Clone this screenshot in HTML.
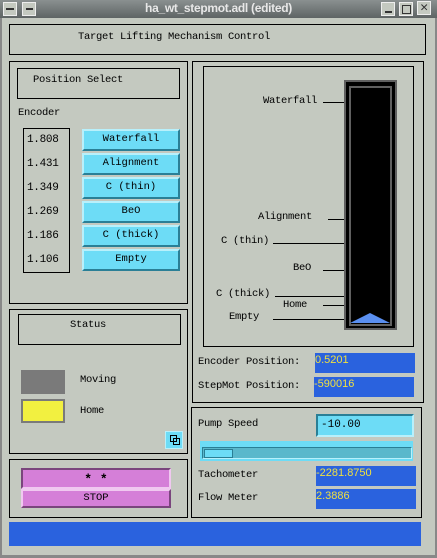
<html><head><style>
body{margin:0;width:437px;height:558px;background:#c4c9c0;position:relative;overflow:hidden;font-family:"Liberation Mono",monospace;font-size:10.5px;color:#000}
div{position:absolute;box-sizing:border-box}
.b{border:1px solid #000}
.t{white-space:nowrap;letter-spacing:-0.3px}
.btn{background:#6ddcf6;border:2px solid;border-color:#b8f0fb #2a7f96 #2a7f96 #b8f0fb;text-align:center;line-height:17px}
.v{background:#2a62de;color:#f0e040;line-height:14px;font-family:"Liberation Sans",sans-serif;font-size:11px}
.ln{height:1px;background:#000}
</style></head><body>
<div style="left:0;top:0;width:437px;height:18px;background:linear-gradient(#8a9090,#5e6464)"></div>
<div style="left:3px;top:2px;width:14px;height:14px;background:#c4c9c0;border:1px solid #eee"><div style="left:2px;top:5px;width:8px;height:2px;background:#333"></div></div>
<div style="left:22px;top:2px;width:14px;height:14px;background:#c4c9c0;border:1px solid #eee"><div style="left:3px;top:5px;width:7px;height:2px;background:#333"></div></div>
<div class="t" style="left:0;width:437px;top:1px;text-align:center;color:#e8e8e8;font-family:'Liberation Sans',sans-serif;font-weight:bold;font-size:12px">ha_wt_stepmot.adl (edited)</div>
<div style="left:381px;top:2px;width:14px;height:14px;background:#c4c9c0;border:1px solid #eee"><div style="left:3px;top:8px;width:7px;height:2px;background:#333"></div></div>
<div style="left:399px;top:2px;width:14px;height:14px;background:#c4c9c0;border:1px solid #eee"><div style="left:2px;top:2px;width:9px;height:9px;border:1px solid #333"></div></div>
<div class="t" style="left:417px;top:1px;width:14px;height:14px;background:#c4c9c0;border:1px solid #eee;font-size:13px;line-height:12px;text-align:center;color:#333">✕</div>
<div style="left:0;top:18px;width:2px;height:540px;background:#888"></div>
<div style="left:435px;top:18px;width:2px;height:540px;background:#888"></div>
<div style="left:0;top:555px;width:437px;height:3px;background:#888"></div>

<div class="b" style="left:9px;top:24px;width:417px;height:31px"></div>
<div class="t" style="left:78px;top:31px">Target Lifting Mechanism Control</div>

<div class="b" style="left:9px;top:61px;width:179px;height:243px"></div>
<div class="b" style="left:17px;top:68px;width:163px;height:31px"></div>
<div class="t" style="left:33px;top:74px">Position Select</div>
<div class="t" style="left:18px;top:107px">Encoder</div>
<div class="b" style="left:23px;top:128px;width:47px;height:145px"></div>
<div class="t" style="left:27px;top:128px;line-height:24px;font-size:11px">1.808<br>1.431<br>1.349<br>1.269<br>1.186<br>1.106</div>
<div class="btn" style="left:82px;top:129px;width:98px;height:22px">Waterfall</div>
<div class="btn" style="left:82px;top:153px;width:98px;height:22px">Alignment</div>
<div class="btn" style="left:82px;top:177px;width:98px;height:22px">C (thin)</div>
<div class="btn" style="left:82px;top:201px;width:98px;height:22px">BeO</div>
<div class="btn" style="left:82px;top:225px;width:98px;height:22px">C (thick)</div>
<div class="btn" style="left:82px;top:249px;width:98px;height:22px">Empty</div>

<div class="b" style="left:9px;top:309px;width:179px;height:145px"></div>
<div class="b" style="left:18px;top:314px;width:163px;height:31px"></div>
<div class="t" style="left:70px;top:319px">Status</div>
<div style="left:21px;top:370px;width:44px;height:24px;background:#7a7a7a"></div>
<div class="t" style="left:80px;top:374px">Moving</div>
<div style="left:21px;top:399px;width:44px;height:24px;background:#f2f040;border:2px solid #7a7a7a"></div>
<div class="t" style="left:80px;top:405px">Home</div>
<div style="left:165px;top:431px;width:18px;height:18px;background:#6ddcf6;border:1px solid #b8f0fb"><div style="left:4px;top:3px;width:7px;height:7px;border:1px solid #000"></div><div style="left:7px;top:6px;width:7px;height:7px;border:1px solid #000"></div></div>

<div class="b" style="left:9px;top:459px;width:179px;height:59px"></div>
<div style="left:21px;top:468px;width:150px;height:21px;background:#d57fd8;border:2px solid;border-color:#7a457d #f0c8f0 #f0c8f0 #7a457d;text-align:center;font-weight:bold;font-size:13px;line-height:19px">* *</div>
<div style="left:21px;top:489px;width:150px;height:19px;background:#d57fd8;border:2px solid;border-color:#f0c8f0 #7a457d #7a457d #f0c8f0;text-align:center;line-height:15px">STOP</div>

<div class="b" style="left:192px;top:61px;width:232px;height:342px"></div>
<div class="b" style="left:203px;top:66px;width:211px;height:281px"></div>
<div style="left:344px;top:80px;width:53px;height:250px;background:#000;border:2px solid #606060"></div>
<div style="left:349px;top:86px;width:43px;height:240px;border:2px solid #606060;background:#000"></div>
<svg style="position:absolute;left:350px;top:310px" width="42" height="14"><polygon points="0,13 20,3 40,13" fill="#5a8ff0"/></svg>
<div class="t" style="left:263px;top:95px">Waterfall</div><div class="ln" style="left:323px;top:102px;width:21px"></div>
<div class="t" style="left:258px;top:211px">Alignment</div><div class="ln" style="left:328px;top:219px;width:16px"></div>
<div class="t" style="left:221px;top:235px">C (thin)</div><div class="ln" style="left:273px;top:243px;width:71px"></div>
<div class="t" style="left:293px;top:262px">BeO</div><div class="ln" style="left:323px;top:270px;width:21px"></div>
<div class="t" style="left:216px;top:288px">C (thick)</div><div class="ln" style="left:275px;top:296px;width:69px"></div>
<div class="t" style="left:283px;top:299px">Home</div><div class="ln" style="left:323px;top:305px;width:21px"></div>
<div class="t" style="left:229px;top:311px">Empty</div><div class="ln" style="left:273px;top:319px;width:71px"></div>

<div class="t" style="left:198px;top:356px">Encoder Position:</div>
<div class="v" style="left:315px;top:353px;width:100px;height:20px">0.5201</div>
<div class="t" style="left:198px;top:380px">StepMot Position:</div>
<div class="v" style="left:314px;top:377px;width:100px;height:20px">-590016</div>

<div class="b" style="left:191px;top:407px;width:231px;height:111px"></div>
<div class="t" style="left:198px;top:418px">Pump Speed</div>
<div style="left:316px;top:414px;width:98px;height:23px;background:#6ddcf6;border:2px solid;border-color:#2a7f96 #b8f0fb #b8f0fb #2a7f96;padding-left:3px;line-height:19px;font-size:11px">-10.00</div>
<div style="left:200px;top:441px;width:213px;height:20px;background:#6ddcf6"></div>
<div style="left:202px;top:447px;width:210px;height:12px;background:#5ab8cc;border:1px solid;border-color:#2a7f96 #b8f0fb #b8f0fb #2a7f96"></div>
<div style="left:204px;top:449px;width:29px;height:9px;background:#6ddcf6;border:1px solid #2a7f96"></div>
<div class="t" style="left:198px;top:469px">Tachometer</div>
<div class="v" style="left:316px;top:466px;width:100px;height:20px">-2281.8750</div>
<div class="t" style="left:198px;top:492px">Flow Meter</div>
<div class="v" style="left:316px;top:489px;width:100px;height:20px">2.3886</div>

<div style="left:9px;top:522px;width:412px;height:24px;background:#2a62de"></div>
</body></html>
